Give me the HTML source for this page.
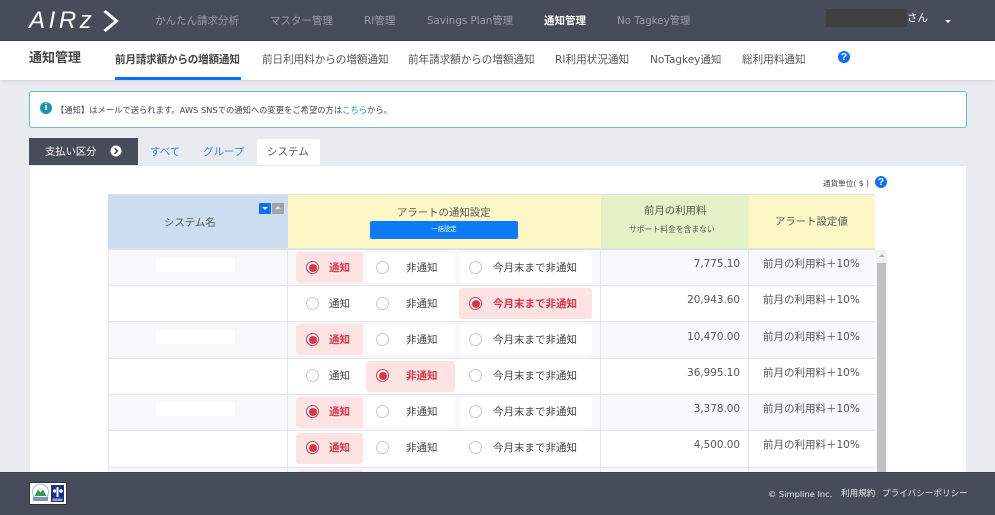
<!DOCTYPE html>
<html lang="ja"><head><meta charset="utf-8"><title>通知管理</title>
<style>
*{box-sizing:border-box}
html,body{margin:0;padding:0}
body{width:995px;height:515px;overflow:hidden;position:relative;background:#e8ecf1;font-family:"DejaVu Sans","Noto Sans CJK JP",sans-serif;color:#444;font-size:11px}
.a{position:absolute;white-space:nowrap}
.t{position:absolute;white-space:nowrap;line-height:14px}
.nav{color:#9a9eaa;font-size:10.5px;top:14px}
.sub{color:#555;font-size:10.6px;top:53px}
.rowbg{position:absolute;left:108px;width:767px;height:36px;border-bottom:1px solid #e3e6ea}
.vl{position:absolute;width:1px;top:249px;height:224px;background:#e6e9ec}
.box{position:absolute;height:31px;border-radius:3px;background:#fff}
.box.s{background:#fde3e4}
.r{position:absolute;width:13px;height:13px;border-radius:50%;border:1px solid #c8c8c8;background:#fff}
.r.s{border:1px solid #dc3545;background:#fff}
.r.s:after{content:"";position:absolute;left:1.5px;top:1.5px;width:8px;height:8px;border-radius:50%;background:#dc3545}
.l{position:absolute;font-size:10.5px;line-height:14px;color:#444;white-space:nowrap}
.l.s{color:#dc3545;font-weight:bold}
.num{position:absolute;right:255px;font-size:10.4px;line-height:14px;color:#555;white-space:nowrap}
.val{position:absolute;left:763px;font-size:10.5px;line-height:14px;color:#555;white-space:nowrap}
.nm{position:absolute;left:156px;width:79px;height:15px;background:#fff}
.rowwrap{position:absolute;left:0;top:0;width:995px;height:473px;overflow:hidden}
</style></head><body>

<!-- Header -->
<div class="a" style="left:0;top:0;width:995px;height:41px;background:#474c5b;border-bottom:1px solid #3a3e4b"></div>
<div class="a" style="left:29px;top:6px;font:italic 24px/30px 'Liberation Sans',sans-serif;color:#fff;letter-spacing:3.6px">AIRz</div>
<svg class="a" style="left:102px;top:9px" width="17" height="24" viewBox="0 0 17 24"><path d="M2.5 2 L14.5 12 L2.5 22" fill="none" stroke="#fff" stroke-width="3"/></svg>
<div class="t nav" style="left:155px">かんたん請求分析</div>
<div class="t nav" style="left:270px">マスター管理</div>
<div class="t nav" style="left:364px">RI管理</div>
<div class="t nav" style="left:427px;font-size:10.3px">Savings Plan管理</div>
<div class="t nav" style="left:544px;color:#fff;font-weight:bold">通知管理</div>
<div class="t nav" style="left:617px;font-size:10.3px">No Tagkey管理</div>
<div class="a" style="left:826px;top:9px;width:81px;height:18px;background:#3f3f41"></div>
<div class="t" style="left:907px;top:11px;color:#fff;font-size:10.5px">さん</div>
<div class="a" style="left:945px;top:20px;width:0;height:0;border-left:3px solid transparent;border-right:3px solid transparent;border-top:3px solid #fff"></div>

<!-- Sub nav -->
<div class="a" style="left:0;top:41px;width:995px;height:39px;background:#fff;box-shadow:0 1px 3px rgba(0,0,0,.12)"></div>
<div class="t" style="left:29px;top:52px;font-size:13px;font-weight:bold;color:#444">通知管理</div>
<div class="t sub" style="left:115px;color:#444;font-weight:bold;letter-spacing:-.2px">前月請求額からの増額通知</div>
<div class="a" style="left:115px;top:77px;width:126px;height:3px;background:#0d6efd"></div>
<div class="t sub" style="left:262px;letter-spacing:-.05px">前日利用料からの増額通知</div>
<div class="t sub" style="left:408px;letter-spacing:-.05px">前年請求額からの増額通知</div>
<div class="t sub" style="left:555px">RI利用状況通知</div>
<div class="t sub" style="left:650px;font-size:10.5px">NoTagkey通知</div>
<div class="t sub" style="left:742px">総利用料通知</div>
<div class="a" style="left:838px;top:51px;width:12px;height:12px;border-radius:50%;background:#0d6efd;color:#fff;font:bold 10.5px/12px 'Liberation Sans',sans-serif;text-align:center">?</div>

<!-- Alert -->
<div class="a" style="left:29px;top:91px;width:938px;height:37px;background:#fff;border:1px solid #6fb9c7;border-radius:3px"></div>
<div class="a" style="left:40px;top:102px;width:12px;height:12px;border-radius:50%;background:#1496ac;color:#fff;font:bold 10px/12px 'Liberation Serif',serif;text-align:center">i</div>
<div class="t" style="left:56px;top:103px;font-size:8.3px;color:#444">【通知】はメールで送られます。AWS SNSでの通知への変更をご希望の方は<span style="color:#1496ac">こちら</span>から。</div>

<!-- Tabs -->
<div class="a" style="left:29px;top:138px;width:109px;height:27px;background:#474c5b"></div>
<div class="t" style="left:45px;top:145px;color:#fff;font-size:10.3px">支払い区分</div>
<svg class="a" style="left:110px;top:145px" width="12" height="12" viewBox="0 0 12 12"><circle cx="6" cy="6" r="5.5" fill="#fff"/><path d="M4.6 3.2 L7.4 6 L4.6 8.8" fill="none" stroke="#474c5b" stroke-width="1.6"/></svg>
<div class="t" style="left:150px;top:145px;color:#3b82f0;font-size:10.5px">すべて</div>
<div class="t" style="left:203px;top:145px;color:#3b82f0;font-size:10.5px">グループ</div>
<div class="a" style="left:257px;top:139px;width:63px;height:27px;background:#fff;border-radius:2px 2px 0 0"></div>
<div class="t" style="left:267px;top:145px;color:#555;font-size:10.5px">システム</div>

<!-- Panel -->
<div class="a" style="left:29px;top:165px;width:938px;height:308px;background:#fff;border:1px solid #e6e9ed;border-bottom:0"></div>
<div class="t" style="left:823px;top:177px;font-size:7.6px;color:#444">通貨単位( $ )</div>
<div class="a" style="left:875px;top:176px;width:12px;height:12px;border-radius:50%;background:#0d6efd;color:#fff;font:bold 10.5px/12px 'Liberation Sans',sans-serif;text-align:center">?</div>

<!-- Table head -->
<div class="a" style="left:108px;top:194px;width:767px;height:1.5px;background:#dfe2e6"></div>
<div class="a" style="left:108px;top:195px;width:180px;height:54px;background:#cbddef"></div>
<div class="a" style="left:288px;top:195px;width:313px;height:54px;background:#fdf6c5"></div>
<div class="a" style="left:601px;top:195px;width:148px;height:54px;background:#e4f1c6"></div>
<div class="a" style="left:749px;top:195px;width:126px;height:54px;background:#fdf6c5"></div>
<div class="a" style="left:108px;top:248px;width:767px;height:2px;background:#dfe2e6"></div>
<div class="t" style="left:164px;top:216px;font-size:10.4px;color:#555">システム名</div>
<div class="a" style="left:259px;top:203px;width:12px;height:11px;background:#0d6efd;border-radius:1px"></div>
<div class="a" style="left:262px;top:207px;width:0;height:0;border-left:3px solid transparent;border-right:3px solid transparent;border-top:3px solid #fff"></div>
<div class="a" style="left:272px;top:203px;width:12px;height:11px;background:#a3a3a3;border-radius:1px"></div>
<div class="a" style="left:275px;top:206px;width:0;height:0;border-left:3px solid transparent;border-right:3px solid transparent;border-bottom:3px solid #e6e6e6"></div>
<div class="t" style="left:397px;top:206px;font-size:10.4px;color:#555">アラートの通知設定</div>
<div class="a" style="left:370px;top:221px;width:148px;height:18px;background:#0d7bf5;border-radius:2px;color:#fff;font-size:6.3px;line-height:18px;text-align:center">一括設定</div>
<div class="t" style="left:644px;top:204px;font-size:10.4px;color:#555">前月の利用料</div>
<div class="t" style="left:629px;top:223px;font-size:7.8px;color:#555">サポート料金を含まない</div>
<div class="t" style="left:775px;top:215px;font-size:10.4px;color:#555">アラート設定値</div>

<!-- Rows -->
<div class="rowwrap">
<div class="rowbg" style="top:250px;background:#f7f8fa"></div>
<div class="rowbg" style="top:286px;background:#fff"></div>
<div class="rowbg" style="top:322px;background:#f7f8fa;height:37px"></div>
<div class="rowbg" style="top:359px;background:#fff"></div>
<div class="rowbg" style="top:395px;background:#f7f8fa"></div>
<div class="rowbg" style="top:431px;background:#fff;height:37px"></div>
<div class="rowbg" style="top:468px;background:#f7f8fa"></div>
<div class="vl" style="left:108px"></div>
<div class="vl" style="left:287px"></div>
<div class="vl" style="left:600px"></div>
<div class="vl" style="left:748px"></div>

<div class="nm" style="top:257px"></div>
<div class="nm" style="top:329px"></div>
<div class="nm" style="top:401px"></div>

<!-- Row 1 -->
<div class="box s" style="left:296px;width:67px;top:252px"></div><div class="box" style="left:366px;width:89px;top:252px"></div><div class="box" style="left:459px;width:133px;top:252px"></div>
<div class="r s" style="left:306px;top:261px"></div><div class="l s" style="left:329px;top:261px">通知</div>
<div class="r" style="left:376px;top:261px"></div><div class="l" style="left:406px;top:261px">非通知</div>
<div class="r" style="left:469px;top:261px"></div><div class="l" style="left:493px;top:261px">今月末まで非通知</div>
<div class="num" style="top:257px">7,775.10</div><div class="val" style="top:257px">前月の利用料＋10%</div>

<!-- Row 2 -->
<div class="box s" style="left:459px;width:133px;top:288px"></div>
<div class="r" style="left:306px;top:297px"></div><div class="l" style="left:329px;top:297px">通知</div>
<div class="r" style="left:376px;top:297px"></div><div class="l" style="left:406px;top:297px">非通知</div>
<div class="r s" style="left:469px;top:297px"></div><div class="l s" style="left:493px;top:297px">今月末まで非通知</div>
<div class="num" style="top:293px">20,943.60</div><div class="val" style="top:293px">前月の利用料＋10%</div>

<!-- Row 3 -->
<div class="box s" style="left:296px;width:67px;top:324px"></div><div class="box" style="left:366px;width:89px;top:324px"></div><div class="box" style="left:459px;width:133px;top:324px"></div>
<div class="r s" style="left:306px;top:333px"></div><div class="l s" style="left:329px;top:333px">通知</div>
<div class="r" style="left:376px;top:333px"></div><div class="l" style="left:406px;top:333px">非通知</div>
<div class="r" style="left:469px;top:333px"></div><div class="l" style="left:493px;top:333px">今月末まで非通知</div>
<div class="num" style="top:330px">10,470.00</div><div class="val" style="top:330px">前月の利用料＋10%</div>

<!-- Row 4 -->
<div class="box s" style="left:366px;width:89px;top:361px"></div>
<div class="r" style="left:306px;top:369px"></div><div class="l" style="left:329px;top:369px">通知</div>
<div class="r s" style="left:376px;top:369px"></div><div class="l s" style="left:406px;top:369px">非通知</div>
<div class="r" style="left:469px;top:369px"></div><div class="l" style="left:493px;top:369px">今月末まで非通知</div>
<div class="num" style="top:366px">36,995.10</div><div class="val" style="top:366px">前月の利用料＋10%</div>

<!-- Row 5 -->
<div class="box s" style="left:296px;width:67px;top:397px"></div><div class="box" style="left:366px;width:89px;top:397px"></div><div class="box" style="left:459px;width:133px;top:397px"></div>
<div class="r s" style="left:306px;top:405px"></div><div class="l s" style="left:329px;top:405px">通知</div>
<div class="r" style="left:376px;top:405px"></div><div class="l" style="left:406px;top:405px">非通知</div>
<div class="r" style="left:469px;top:405px"></div><div class="l" style="left:493px;top:405px">今月末まで非通知</div>
<div class="num" style="top:402px">3,378.00</div><div class="val" style="top:402px">前月の利用料＋10%</div>

<!-- Row 6 -->
<div class="box s" style="left:296px;width:67px;top:433px"></div>
<div class="r s" style="left:306px;top:441px"></div><div class="l s" style="left:329px;top:441px">通知</div>
<div class="r" style="left:376px;top:441px"></div><div class="l" style="left:406px;top:441px">非通知</div>
<div class="r" style="left:469px;top:441px"></div><div class="l" style="left:493px;top:441px">今月末まで非通知</div>
<div class="num" style="top:438px">4,500.00</div><div class="val" style="top:438px">前月の利用料＋10%</div>

<!-- Row 7 -->
<div class="box s" style="left:296px;width:67px;top:470px"></div>

<!-- Scrollbar -->
<div class="a" style="left:876px;top:250px;width:11px;height:223px;background:#f1f1f1"></div>
<div class="a" style="left:878.5px;top:254px;width:0;height:0;border-left:3px solid transparent;border-right:3px solid transparent;border-bottom:3px solid #b5b5b5"></div>
<div class="a" style="left:877px;top:263px;width:9px;height:210px;background:#c1c1c1"></div>
</div>

<!-- Footer -->
<div class="a" style="left:0;top:472px;width:995px;height:43px;background:#474c5b;border-top:1px solid #3a3e4b"></div>
<div class="a" style="left:29px;top:482px;width:38px;height:23px;background:#fff;border:1px solid #2f3340"></div>
<svg class="a" style="left:30px;top:483px" width="36" height="21" viewBox="0 0 36 21"><circle cx="10.5" cy="9" r="8" fill="#fff" stroke="#a8c0dc" stroke-width="1"/><path d="M4.5 13 L8 6.5 L10.5 9.5 L13 6.5 L16.5 13 Z" fill="#2f9d57"/><rect x="3" y="14" width="15" height="4" fill="#8494b4"/><rect x="21" y="2" width="13" height="17" fill="#1c2f8f"/><path d="M27.5 4 V14" stroke="#fff" stroke-width="2" fill="none"/><circle cx="24.5" cy="8" r="1.6" fill="#fff"/><circle cx="31" cy="8" r="1.8" fill="#fff"/><rect x="22.5" y="15.5" width="10" height="2.5" fill="#8fa0d0"/></svg>
<div class="t" style="left:768px;top:487px;color:#e8e8e8;font-size:8.3px">© Simpline Inc.</div>
<div class="t" style="left:841px;top:487px;color:#e8e8e8;font-size:8.6px">利用規約</div>
<div class="t" style="left:882px;top:487px;color:#e8e8e8;font-size:8.6px">プライバシーポリシー</div>
</body></html>
